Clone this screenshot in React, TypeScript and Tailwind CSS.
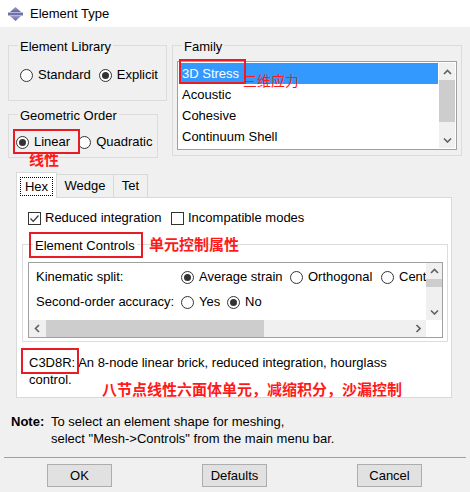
import React from 'react';
import clsx from 'clsx';

type Dir = 'up' | 'down' | 'left' | 'right';

const Chevron = ({ dir }: { dir: Dir }) => {
  const vertical = dir === 'up' || dir === 'down';
  const d = {
    up: 'M1 5 L4.5 1.5 L8 5',
    down: 'M1 1.5 L4.5 5 L8 1.5',
    left: 'M5 1 L1.5 4.5 L5 8',
    right: 'M1.5 1 L5 4.5 L1.5 8',
  }[dir];
  return (
    <svg width={vertical ? 9 : 6} height={vertical ? 6 : 9} viewBox={vertical ? '0 0 9 6' : '0 0 6 9'}>
      <path d={d} fill="none" stroke="#606060" strokeWidth="1.6" />
    </svg>
  );
};

const TitleIcon = () => (
  <svg width="15" height="14" viewBox="0 0 15 14">
    <defs>
      <linearGradient id="ti" x1="0" y1="0" x2="0" y2="1">
        <stop offset="0" stopColor="#9a9ad0" />
        <stop offset="1" stopColor="#6464a0" />
      </linearGradient>
    </defs>
    <polygon points="7.5,0 13,5 2,5" fill="url(#ti)" />
    <rect x="0" y="5.5" width="15" height="3" fill="#7070ac" />
    <polygon points="2,9 13,9 7.5,14" fill="url(#ti)" />
  </svg>
);

const Radio = ({ checked }: { checked?: boolean }) => (
  <span className="flex h-[13px] w-[13px] shrink-0 items-center justify-center rounded-full border border-[#333333] bg-white">
    {checked && <span className="h-[7px] w-[7px] rounded-full bg-[#333333]" />}
  </span>
);

const RadioOption = ({
  label,
  checked,
  className,
}: {
  label: string;
  checked?: boolean;
  className?: string;
}) => (
  <span className={clsx('flex shrink-0 items-center gap-[5px]', className)}>
    <Radio checked={checked} />
    <span>{label}</span>
  </span>
);

const Checkbox = ({ checked }: { checked?: boolean }) => (
  <span className="flex h-[13px] w-[13px] shrink-0 items-center justify-center border border-[#333333] bg-white">
    {checked && (
      <svg width="11" height="11" viewBox="0 0 11 11">
        <path d="M1.5 5.5 L4.2 8.3 L9.5 2.5" fill="none" stroke="#333333" strokeWidth="1.2" />
      </svg>
    )}
  </span>
);

const GroupBox = ({
  title,
  className,
  legendClass = 'ml-[9px]',
  children,
}: {
  title: string;
  className?: string;
  legendClass?: string;
  children?: React.ReactNode;
}) => (
  <fieldset className={clsx('border border-[#dcdcdc]', className)}>
    <legend className={clsx('px-[2px] pt-[4px] leading-[16px]', legendClass)}>{title}</legend>
    {children}
  </fieldset>
);

const RedBox = ({ className }: { className: string }) => (
  <div className={clsx('pointer-events-none absolute border-2 border-[#e81c24]', className)} />
);

const families = ['3D Stress', 'Acoustic', 'Cohesive', 'Continuum Shell'];

const App = () => {
  return (
    <div className="relative h-[492px] w-[470px] overflow-hidden bg-[#f0f0f0] font-['Liberation_Sans','Noto_Sans_CJK_SC',sans-serif] text-[13px] leading-[16px] text-black">
      {/* title bar */}
      <div className="flex h-[27px] items-center bg-white pl-[8px]">
        <TitleIcon />
        <span className="ml-[7px]">Element Type</span>
      </div>

      <div className="px-[8px] pt-[8px]">
        <div className="flex gap-[5px]">
          <div className="flex w-[159px] flex-col gap-[3px]">
            <GroupBox title="Element Library" className="h-[66px] w-[159px]">
              <div className="flex gap-[8px] pl-[11px] pt-[12px]">
                <RadioOption label="Standard" />
                <RadioOption label="Explicit" checked />
              </div>
            </GroupBox>
            <GroupBox title="Geometric Order" className="h-[54px] w-[150px]">
              <div className="flex gap-[8px] pl-[7px] pt-[10px]">
                <RadioOption label="Linear" checked />
                <RadioOption label="Quadratic" />
              </div>
            </GroupBox>
          </div>

          <GroupBox title="Family" className="h-[121px] w-[291px]">
            <div className="ml-[4px] mt-[6px] flex h-[89px] w-[280px] border border-[#a0a0a0] bg-white">
              <div className="flex-1 p-[1px]">
                {families.map((f, i) => (
                  <div
                    key={f}
                    className={clsx(
                      'flex h-[21px] items-center pl-[3px]',
                      i === 0 && 'bg-[#3399ff] text-white',
                    )}
                  >
                    {f}
                  </div>
                ))}
              </div>
              <div className="my-[1px] mr-[1px] flex w-[16px] flex-col bg-[#f0f0f0]">
                <div className="flex h-[17px] items-center justify-center">
                  <Chevron dir="up" />
                </div>
                <div className="h-[42px] bg-[#cdcdcd]" />
                <div className="flex-1" />
                <div className="flex h-[17px] items-center justify-center">
                  <Chevron dir="down" />
                </div>
              </div>
            </div>
          </GroupBox>
        </div>

        {/* tabs */}
        <div className="ml-[8px] mt-[14px] flex h-[25px] items-end">
          <div className="relative z-10 -mb-px flex h-[26px] w-[41px] justify-center border border-b-0 border-[#d9d9d9] bg-white pt-[4px]">
            <span className="h-[19px] border border-dotted border-black px-[4px] leading-[17px]">Hex</span>
          </div>
          <div className="flex h-[23px] w-[57px] items-center justify-center border-r border-t border-[#d9d9d9]">
            Wedge
          </div>
          <div className="flex h-[23px] w-[34px] items-center justify-center border-r border-t border-[#d9d9d9]">
            Tet
          </div>
        </div>

        <div className="ml-[8px] h-[201px] w-[436px] border border-[#d9d9d9] bg-white">
          <div className="flex pl-[11px] pt-[12px]">
            <span className="flex w-[143px] items-center gap-[4px]">
              <Checkbox checked />
              <span>Reduced integration</span>
            </span>
            <span className="flex items-center gap-[4px]">
              <Checkbox />
              <span>Incompatible modes</span>
            </span>
          </div>

          <GroupBox
            title="Element Controls"
            legendClass="ml-[10px]"
            className="ml-[5px] mt-[8px] h-[108px] w-[426px]"
          >
            <div className="ml-[5px] mt-[8px] grid h-[76px] w-[415px] grid-cols-[1fr_16px] grid-rows-[1fr_17px] border border-[#a0a0a0] bg-white">
              <div className="overflow-hidden whitespace-nowrap pl-[7px] pt-[6px]">
                <div className="flex h-[16px] items-center">
                  <span className="w-[145px] shrink-0">Kinematic split:</span>
                  <RadioOption label="Average strain" checked className="w-[109px] gap-[4px]" />
                  <RadioOption label="Orthogonal" className="w-[91px] gap-[4px]" />
                  <RadioOption label="Cent" className="gap-[4px]" />
                </div>
                <div className="mt-[9px] flex h-[16px] items-center">
                  <span className="w-[145px] shrink-0">Second-order accuracy:</span>
                  <RadioOption label="Yes" className="w-[46px] gap-[4px]" />
                  <RadioOption label="No" checked className="gap-[4px]" />
                </div>
              </div>
              <div className="flex flex-col bg-[#f0f0f0]">
                <div className="flex h-[16px] items-center justify-center">
                  <Chevron dir="up" />
                </div>
                <div className="h-[8px] bg-[#cdcdcd]" />
                <div className="flex-1" />
                <div className="flex h-[16px] items-center justify-center">
                  <Chevron dir="down" />
                </div>
              </div>
              <div className="flex bg-[#f0f0f0]">
                <div className="flex w-[16px] items-center justify-center">
                  <Chevron dir="left" />
                </div>
                <div className="ml-px w-[218px] bg-[#cdcdcd]" />
                <div className="flex-1" />
                <div className="flex w-[16px] items-center justify-center">
                  <Chevron dir="right" />
                </div>
              </div>
              <div className="bg-white" />
            </div>
          </GroupBox>

          <p className="mt-[12px] pl-[12px] leading-[17px]">
            C3D8R: An 8-node linear brick, reduced integration, hourglass
            <br />
            control.
          </p>
        </div>

        {/* note */}
        <div className="ml-[3px] mt-[15px] flex leading-[17px]">
          <span className="w-[40px] shrink-0 font-bold">Note:</span>
          <span>
            To select an element shape for meshing,
            <br />
            select &quot;Mesh-&gt;Controls&quot; from the main menu bar.
          </span>
        </div>

        <div className="-mx-[4px] mt-[10px] h-px bg-[#a0a0a0]" />

        <div className="ml-[39px] mt-[6px] flex gap-[90px]">
          {['OK', 'Defaults', 'Cancel'].map((b) => (
            <button
              key={b}
              className="flex h-[23px] w-[65px] items-center justify-center border border-[#adadad] bg-[#e1e1e1]"
            >
              {b}
            </button>
          ))}
        </div>
      </div>

      {/* red annotations */}
      <RedBox className="left-[13px] top-[129px] h-[25px] w-[67px]" />
      <RedBox className="left-[179px] top-[59px] h-[25px] w-[67px]" />
      <RedBox className="left-[29px] top-[232px] h-[26px] w-[114px]" />
      <RedBox className="left-[21px] top-[348px] h-[26px] w-[58px]" />

      <span className="absolute left-[29px] top-[150px] text-[15px] font-bold leading-[20px] text-[#ff1a1a]">线性</span>
      <span className="absolute left-[243px] top-[71px] text-[14px] leading-[20px] text-[#ff1a1a]">三维应力</span>
      <span className="absolute left-[149px] top-[235px] text-[15px] font-bold leading-[20px] text-[#ff1a1a]">单元控制属性</span>
      <span className="absolute left-[102px] top-[380px] text-[15px] font-bold leading-[20px] text-[#ff1a1a]">
        八节点线性六面体单元，减缩积分，沙漏控制
      </span>
    </div>
  );
};

export default App;
